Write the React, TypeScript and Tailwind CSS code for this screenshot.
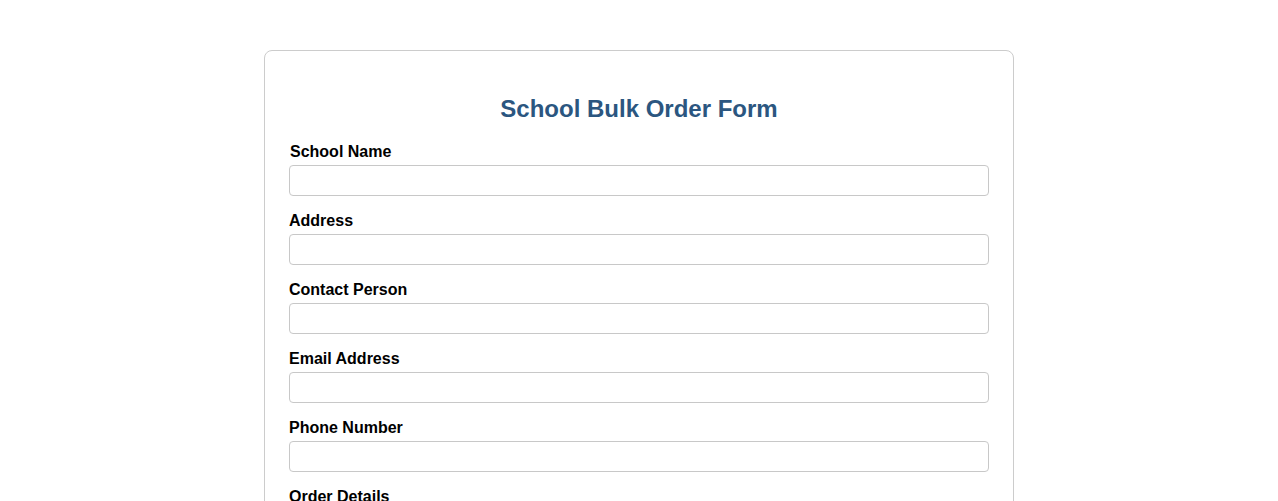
const fields = [
  { id: "school", label: "School Name", type: "text" },
  { id: "address", label: "Address", type: "text" },
  { id: "contact", label: "Contact Person", type: "text" },
  { id: "email", label: "Email Address", type: "email" },
  { id: "phone", label: "Phone Number", type: "tel" },
];

export default function App() {
  return (
    <div className="min-h-screen bg-white px-5 pt-5 font-['Liberation_Sans',Arial,sans-serif] leading-[1.15] text-black">
      <form className="mx-auto mt-[30px] w-[750px] rounded-lg border border-[#cccccc] bg-white p-6">
        <h2 className="my-5 text-center text-2xl leading-[27px] font-bold text-[#2b5680]">School Bulk Order Form</h2>

        {fields.map((f, i) => (
          <div key={f.id}>
            <label htmlFor={f.id} className={`block pt-px text-base leading-[18px] font-bold ${i === 0 ? "pl-px" : ""}`}>
              {f.label}
            </label>
            <input
              id={f.id}
              type={f.type}
              className="mt-[4px] mb-[15px] block h-[31px] w-full rounded border border-[#c8c8c8] px-2 text-base outline-none"
            />
          </div>
        ))}

        <label htmlFor="details" className="block pt-px text-base leading-[18px] font-bold">
          Order Details
        </label>
        <textarea
          id="details"
          rows={5}
          className="mt-[4px] mb-[15px] block w-full rounded border border-[#c8c8c8] px-2 py-1 text-base outline-none"
        />

        <button
          type="submit"
          className="w-full rounded bg-[#2b5680] py-2 text-base font-bold text-white"
        >
          Submit Order
        </button>
      </form>
    </div>
  );
}
